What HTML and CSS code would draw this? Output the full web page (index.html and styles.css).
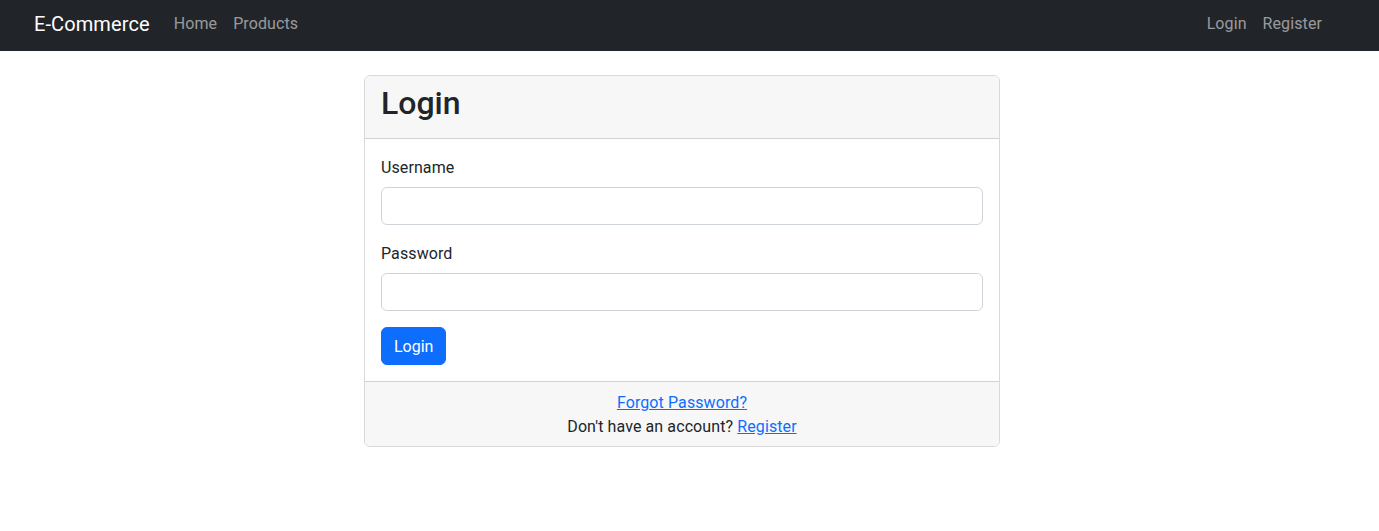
FILE: index.html
```html
<!DOCTYPE html>
<html lang="en">
<head>
<meta charset="utf-8">
<title>Login - E-Commerce</title>
<link rel="stylesheet" href="styles.css">
</head>
<body>
<nav class="navbar">
  <div class="navbar-inner">
    <a class="brand" href="#">E-Commerce</a>
    <ul class="nav nav-left">
      <li><a class="nav-link" href="#">Home</a></li>
      <li><a class="nav-link" href="#">Products</a></li>
    </ul>
    <ul class="nav nav-right">
      <li><a class="nav-link" href="#">Login</a></li>
      <li><a class="nav-link" href="#">Register</a></li>
    </ul>
  </div>
</nav>
<main class="main">
  <div class="card">
    <div class="card-header">
      <h2 class="card-title">Login</h2>
    </div>
    <div class="card-body">
      <form>
        <div class="field">
          <label class="label" for="username">Username</label>
          <input class="input" type="text" id="username">
        </div>
        <div class="field">
          <label class="label" for="password">Password</label>
          <input class="input" type="password" id="password">
        </div>
        <button class="btn" type="submit">Login</button>
      </form>
    </div>
    <div class="card-footer">
      <div><a class="link" href="#">Forgot Password?</a></div>
      <div>Don't have an account? <a class="link" href="#">Register</a></div>
    </div>
  </div>
</main>
</body>
</html>
```
FILE: styles.css
```css
* { box-sizing: border-box; }
html, body { margin: 0; padding: 0; }
body {
  font-family: Roboto, "Liberation Sans", Arial, sans-serif;
  font-size: 16px;
  line-height: 1.5;
  color: #212529;
  background: #fff;
  letter-spacing: 0.1px;
}
.navbar {
  background: #212529;
  height: 51px;
}
.navbar-inner {
  width: 1364px;
  height: 51px;
  padding: 0 34px;
  display: flex;
  align-items: center;
}
.brand {
  font-size: 20px;
  color: #fff;
  text-decoration: none;
  margin-right: 16px;
  line-height: 30px;
  padding-bottom: 3px;
}
.nav {
  list-style: none;
  margin: 0;
  padding: 0;
  display: flex;
}
.nav-right { margin-left: auto; }
.nav-link {
  display: block;
  padding: 6px 8px 10px;
  color: rgba(255, 255, 255, 0.55);
  text-decoration: none;
  line-height: 24px;
}
.main {
  width: 1364px;
  padding-top: 24px;
}
.card {
  width: 636px;
  margin: 0 auto;
  border: 1px solid rgba(0, 0, 0, 0.15);
  border-radius: 6px;
  overflow: hidden;
}
.card-header {
  background: #f7f7f7;
  padding: 8px 16px;
  border-bottom: 1px solid rgba(0, 0, 0, 0.15);
}
.card-title {
  margin: 0 0 8px;
  font-size: 32px;
  font-weight: 500;
  line-height: 1.2;
  letter-spacing: 0;
}
.card-body {
  padding: 16px;
}
.field { margin-bottom: 16px; }
.label {
  display: block;
  padding-top: 1px;
  margin-bottom: 7px;
}
.input {
  display: block;
  width: 100%;
  height: 38px;
  padding: 6px 12px;
  font: inherit;
  border: 1px solid #ced4da;
  border-radius: 6px;
  background: #fff;
}
.btn {
  display: inline-block;
  height: 38px;
  padding: 7px 12px 5px;
  font: inherit;
  line-height: 24px;
  color: #fff;
  background: #0d6efd;
  border: 1px solid #0d6efd;
  border-radius: 6px;
}
.card-footer {
  background: #f7f7f7;
  border-top: 1px solid rgba(0, 0, 0, 0.15);
  padding: 9px 16px 7px;
  text-align: center;
}
.link {
  color: #0d6efd;
  text-decoration: underline;
}
```
